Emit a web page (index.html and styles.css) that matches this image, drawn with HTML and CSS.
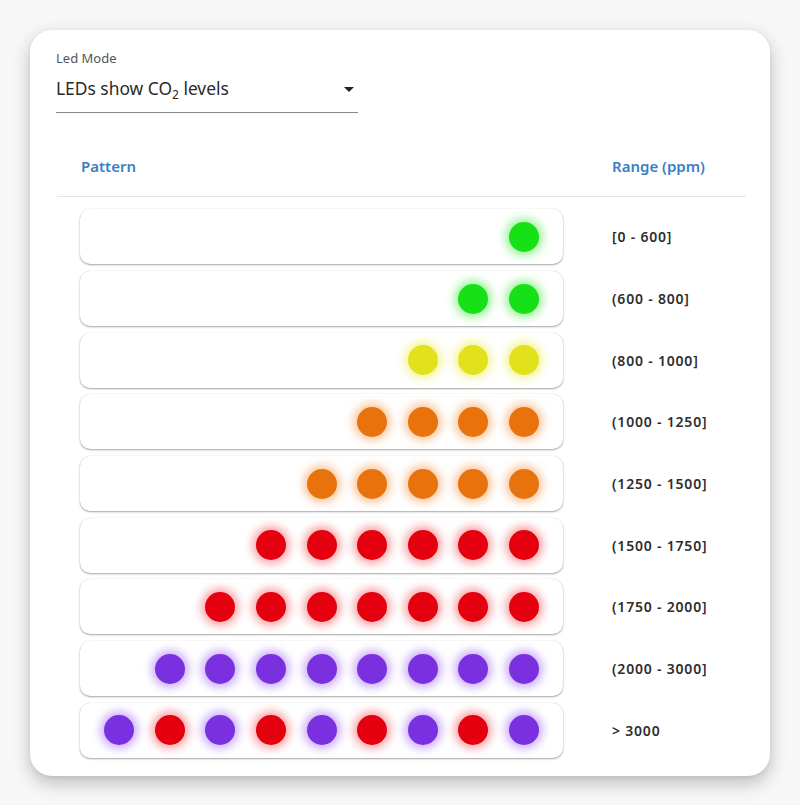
FILE: index.html
```html
<!DOCTYPE html>
<html>
<head>
<meta charset="utf-8">
<link rel="stylesheet" href="styles.css">
</head>
<body>
<div class="card">
  <div class="field">
    <div class="field-label">Led Mode</div>
    <div class="select">
      <span class="select-text">LEDs show CO<sub>2</sub> levels</span>
      <svg class="arrow" width="10" height="5" viewBox="0 0 10 5"><path d="M0 0 L10 0 L5 5 Z" fill="#222"/></svg>
    </div>
  </div>

  <div class="table">
    <div class="thead">
      <div class="th th-pattern">Pattern</div>
      <div class="th th-range">Range (ppm)</div>
    </div>
    <div class="tbody">
      <div class="tr"><div class="td-pattern"><div class="strip"><span class="led g"></span></div></div><div class="td-range">[0 - 600]</div></div>
      <div class="tr"><div class="td-pattern"><div class="strip"><span class="led g"></span><span class="led g"></span></div></div><div class="td-range">(600 - 800]</div></div>
      <div class="tr"><div class="td-pattern"><div class="strip"><span class="led y"></span><span class="led y"></span><span class="led y"></span></div></div><div class="td-range">(800 - 1000]</div></div>
      <div class="tr"><div class="td-pattern"><div class="strip"><span class="led o"></span><span class="led o"></span><span class="led o"></span><span class="led o"></span></div></div><div class="td-range">(1000 - 1250]</div></div>
      <div class="tr"><div class="td-pattern"><div class="strip"><span class="led o"></span><span class="led o"></span><span class="led o"></span><span class="led o"></span><span class="led o"></span></div></div><div class="td-range">(1250 - 1500]</div></div>
      <div class="tr"><div class="td-pattern"><div class="strip"><span class="led r"></span><span class="led r"></span><span class="led r"></span><span class="led r"></span><span class="led r"></span><span class="led r"></span></div></div><div class="td-range">(1500 - 1750]</div></div>
      <div class="tr"><div class="td-pattern"><div class="strip"><span class="led r"></span><span class="led r"></span><span class="led r"></span><span class="led r"></span><span class="led r"></span><span class="led r"></span><span class="led r"></span></div></div><div class="td-range">(1750 - 2000]</div></div>
      <div class="tr"><div class="td-pattern"><div class="strip"><span class="led p"></span><span class="led p"></span><span class="led p"></span><span class="led p"></span><span class="led p"></span><span class="led p"></span><span class="led p"></span><span class="led p"></span></div></div><div class="td-range">(2000 - 3000]</div></div>
      <div class="tr"><div class="td-pattern"><div class="strip"><span class="led p"></span><span class="led r"></span><span class="led p"></span><span class="led r"></span><span class="led p"></span><span class="led r"></span><span class="led p"></span><span class="led r"></span><span class="led p"></span></div></div><div class="td-range">&gt; 3000</div></div>
    </div>
  </div>
</div>
</body>
</html>
```

FILE: styles.css
```css
html, body {
  margin: 0;
  padding: 0;
  background: #f7f7f7;
}
body {
  font-family: "Noto Sans", "Open Sans", sans-serif;
  padding: 30px;
  width: 800px;
  height: 805px;
  box-sizing: border-box;
  overflow: hidden;
}
.card {
  width: 740px;
  height: 746px;
  box-sizing: border-box;
  background: #fff;
  border-radius: 22px;
  padding: 20px 24px 0 26px;
  box-shadow: 0 7px 18px rgba(0, 0, 0, 0.24), 0 1px 4px rgba(0, 0, 0, 0.06);
}
.field {
  width: 302px;
}
.field-label {
  font-size: 13px;
  line-height: 16px;
  color: #555;
}
.select {
  display: flex;
  align-items: center;
  justify-content: space-between;
  padding: 8px 4px 10px 0;
  border-bottom: 1px solid #8a8a8a;
}
.select-text {
  font-size: 17.4px;
  line-height: 28px;
  color: #2a2a2a;
}
.select-text sub {
  font-size: 12px;
  line-height: 0;
  vertical-align: -4px;
}
.arrow {
  display: block;
  margin-top: 2px;
}
.table {
  margin-top: 24px;
  margin-left: 1px;
}
.thead {
  display: grid;
  grid-template-columns: 531px 1fr;
  height: 59px;
  border-bottom: 1px solid #e4e4e4;
}
.th {
  font-size: 15px;
  font-weight: 600;
  line-height: 59px;
  color: #3a7fc2;
  padding-left: 24px;
}
.tbody {
  padding-top: 9px;
}
.tr {
  display: grid;
  grid-template-columns: 531px 1fr;
  height: 61.7px;
  align-items: center;
}
.td-pattern {
  padding-left: 23px;
}
.strip {
  width: 483px;
  height: 55px;
  box-sizing: border-box;
  border-radius: 10px;
  background: #fff;
  box-shadow: 0 1px 2px rgba(0, 0, 0, 0.35), 0 0 1px rgba(0, 0, 0, 0.18);
  display: flex;
  align-items: center;
  justify-content: flex-end;
  gap: 20.6px;
  padding-right: 24px;
}
.td-range {
  padding-left: 24px;
  font-size: 14px;
  font-weight: 600;
  color: #2e2e2e;
  letter-spacing: 0.8px;
}
.led {
  width: 30px;
  height: 30px;
  border-radius: 50%;
  flex: none;
}
.led.g { background: #16e016; box-shadow: 0 0 9px 4px rgba(40, 230, 40, 0.45); }
.led.y { background: #e2e21c; box-shadow: 0 0 9px 4px rgba(230, 230, 40, 0.45); }
.led.o { background: #e8730c; box-shadow: 0 0 9px 4px rgba(240, 120, 20, 0.4); }
.led.r { background: #e4000e; box-shadow: 0 0 9px 4px rgba(240, 20, 30, 0.38); }
.led.p { background: #7b30e0; box-shadow: 0 0 9px 4px rgba(130, 60, 240, 0.4); }
```
